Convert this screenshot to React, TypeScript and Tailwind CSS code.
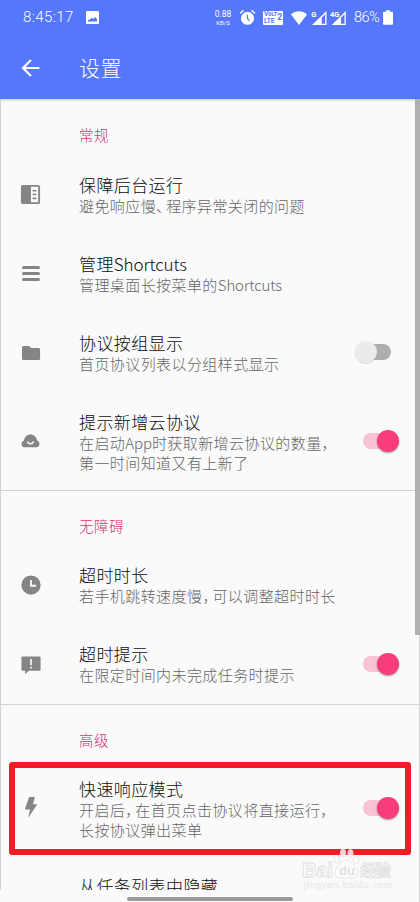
import type { ReactNode } from "react";

/* Narrow full-width punctuation, as the system font sets it. */
function Mark({ children }: { children: ReactNode }) {
  return <span className="tracking-[-5px]">{children}</span>;
}

/* Latin words sit tighter than the ideographs around them. */
function Latin({ children }: { children: ReactNode }) {
  return <span className="tracking-[-0.100px]">{children}</span>;
}

function Glyph({ d, size = 23 }: { d: string; size?: number }) {
  return (
    <svg width={size} height={size} viewBox="0 0 24 24" fill="currentColor" fillRule="evenodd">
      <path d={d} />
    </svg>
  );
}

const paths = {
  reader: "M4 2h16a2 2 0 0 1 2 2v16a2 2 0 0 1-2 2H4a2 2 0 0 1-2-2V4c0-1.1.9-2 2-2zm8.500 2v16H20V4zm1.700 3.200h4v1.700h-4zm0 4h4v1.700h-4zm0 4h4v1.700h-4z",
  folder: "M9.7 3.500H3C2 3.500 1.200 4.400 1.200 5.500v13c0 1.100.8 2 1.800 2h18c1.100 0 1.900-.9 1.900-2V8.100c0-1.100-.8-2-1.900-2h-8.900z",
  clock: "M12 1.500a10.500 10.500 0 1 0 0 21 10.500 10.500 0 0 0 0-21zM11 6.500h2v5.300h4.500v2H11z",
  feedback: "M2 3h20c.8 0 1.500.7 1.500 1.500v14c0 .8-.7 1.500-1.500 1.500H9.500L5 24v-4H2c-.8 0-1.500-.7-1.500-1.500v-14C.5 3.700 1.200 3 2 3zm9 3v7.500h2V6zm0 9.200v2.200h2v-2.200z",
};

function CloudFace() {
  return (
    <svg width="19" height="14" viewBox="0 0 19 14">
      <path fill="currentColor" d="M4 13.300C1.900 13.300.5 11.800.5 9.900c0-1.700 1-3 2.500-3.500C3.400 2.900 6.100.5 9.500.5s6.100 2.400 6.500 5.900c1.500.5 2.500 1.800 2.500 3.500 0 1.900-1.400 3.400-3.500 3.400z" />
      <path d="M6.600 7.300a2.950 2.950 0 0 0 5.800 0" fill="none" stroke="#fafafa" strokeWidth="1.500" />
    </svg>
  );
}

function Toggle({ on }: { on?: boolean }) {
  return on ? (
    <div className="mr-[21px] mb-px flex h-4 w-[36px] items-center justify-end rounded-full bg-[#fac2d5]">
      <div className="h-[22px] w-[22px] shrink-0 rounded-full bg-[#f93d7c] shadow-[0_1px_2px_rgba(0,0,0,0.4)]" />
    </div>
  ) : (
    <div className="mr-[29px] mb-[3px] flex h-4 w-[36px] items-center rounded-full bg-[#adadad]">
      <div className="h-[22px] w-[22px] shrink-0 rounded-full bg-[#ebebeb] shadow-[0_1px_1px_rgba(0,0,0,0.12)]" />
    </div>
  );
}

function Label({ children, first }: { children: string; first?: boolean }) {
  return (
    <h2 className={`pl-[79px] text-[14.500px] leading-5 tracking-[0.600px] text-[#d8306f] ${first ? "h-[57px] pt-[26px]" : "h-[55px] pt-[25px]"}`}>
      {children}
    </h2>
  );
}

function Row({ icon, title, children, toggle, tall }: { icon?: ReactNode; title: ReactNode; children?: ReactNode; toggle?: "on" | "off"; tall?: boolean }) {
  return (
    <div className={`flex shrink-0 items-center ${tall ? "h-[97px]" : "h-[79px]"}`}>
      <div className="flex w-[79px] shrink-0 items-center pb-[2px] pl-[19px] text-[#858585]">
        <div className="flex w-[23px] justify-center">{icon}</div>
      </div>
      <div className="h-full grow whitespace-nowrap pt-[18px]">
        <div className="text-[17px] leading-[22px] tracking-[0.400px] text-[#0c0c0c]">{title}</div>
        <div className="text-[15px] leading-[19.500px] tracking-[0.420px] text-[#666666]">{children}</div>
      </div>
      {toggle && <Toggle on={toggle === "on"} />}
    </div>
  );
}

function StatusBar() {
  return (
    <div className="flex h-[35px] items-center pl-[23px] text-white">
      <span className="w-[62px] font-['Roboto'] text-[15px] tracking-[0.400px]">8:45:17</span>
      <svg className="ml-px" width="13" height="13" viewBox="0 0 13 13">
        <path fill="white" fillRule="evenodd" d="M1 0h11a1 1 0 0 1 1 1v11a1 1 0 0 1-1 1H1a1 1 0 0 1-1-1V1a1 1 0 0 1 1-1zm1 10.500h9V8L8.800 6 7.500 8.200 5.600 6.500 4 8.500 2 9z" />
      </svg>
      <div className="ml-[115px] w-[18px] text-center font-['Roboto'] font-normal">
        <div className="text-[8.500px] leading-[9px]">0.88</div>
        <div className="text-[6px] leading-[7px]">KB/S</div>
      </div>
      <svg className="ml-[7px]" width="17" height="17" viewBox="0 0 17 17">
        <circle cx="8.500" cy="9.300" r="6.500" fill="white" />
        <path d="M1 4.500 4.500 1.200M12.500 1.200 16 4.500" stroke="white" strokeWidth="1.400" />
        <path d="M8.400 6v3.500l2 2" fill="none" stroke="#5577fc" strokeWidth="1.200" />
      </svg>
      <div className="ml-[7px] flex h-[14px] w-[20px] items-center justify-center rounded-[1px] bg-white font-['Roboto'] font-bold text-[#5577fc]">
        <div className="text-[6.500px] leading-[7px]"><div>Vo<span className="text-[5px]">LT</span></div><div>LTE</div></div>
        <div className="text-[9px] leading-none">2</div>
      </div>
      <svg className="ml-[8px]" width="16" height="14" viewBox="0 0 16 14">
        <path fill="white" d="M0 3.500C4.500-.9 11.500-.9 16 3.500L8 14z" />
      </svg>
      <svg className="ml-[4px]" width="35" height="16" viewBox="0 0 35 16">
        <path fill="white" fillRule="evenodd" d="M15.500 1v14H1zm-1.300 3.300-3.500 3.500v6h3.500zM34.800 1v14h-14zm-1.300 3.300-3.500 3.500v6h3.500z" />
        <text x="0.300" y="6.500" fill="white" fontSize="7.500" fontWeight="bold" fontFamily="Roboto">G</text>
        <text x="19" y="6.500" fill="white" fontSize="7.500" fontWeight="bold" fontFamily="Roboto">4G</text>
      </svg>
      <span className="ml-[8px] w-[26px] font-['Roboto'] text-[14.500px] font-light tracking-[-0.500px]">86%</span>
      <svg className="ml-[3px]" width="10" height="15" viewBox="0 0 11 16">
        <path fill="white" d="M3.500 0h4v1.700H10a1 1 0 0 1 1 1V15a1 1 0 0 1-1 1H1a1 1 0 0 1-1-1V2.700a1 1 0 0 1 1-1h2.500z" />
      </svg>
    </div>
  );
}

function Watermark() {
  return (
    <svg className="absolute left-[300px] top-[846px]" width="96" height="46" viewBox="0 0 96 46">
      <g fill="#fdfdfd" fillOpacity="0.800" stroke="#dedede" strokeWidth="0.800" fontFamily="Liberation Sans, Noto Sans CJK SC, sans-serif" fontWeight="bold">
        <text x="2" y="31" fontSize="21" textLength="31">Bai</text>
        <path d="M46 14c-4 0-5 4-8 6.500-6 5-3 12 3 11.500h11c6 .5 9-6.500 3-11.500C52 18 50 14 46 14z" />
        <ellipse cx="37" cy="13" rx="2.800" ry="4" />
        <ellipse cx="43" cy="7" rx="2.700" ry="4" />
        <ellipse cx="50.500" cy="7.500" rx="2.700" ry="4" />
        <ellipse cx="56" cy="14" rx="2.700" ry="4" />
        <text x="39" y="29" fontSize="13" fill="#d9d9d9" stroke="none">du</text>
        <text x="60" y="30" fontSize="16" textLength="31">经验</text>
        <text x="4" y="42" fontSize="9.500" strokeWidth="0.300" stroke="#e6e6e6" fill="#f0f0f0" fontWeight="normal" textLength="88">jingyan.baidu.com</text>
      </g>
    </svg>
  );
}

export default function App() {
  return (
    <div className="relative flex h-[902px] w-[420px] flex-col overflow-hidden bg-[#fafafa] font-['Noto_Sans_CJK_SC',sans-serif] font-light">
      <header className="h-[99px] shrink-0 bg-[#5577fc]">
        <StatusBar />
        <div className="flex h-[66px] items-center pl-[21px] text-white">
          <svg width="20" height="20" viewBox="0 0 20 20" fill="none" stroke="white" strokeWidth="2.200">
            <path d="M18.500 10H2.500M10 2l-8 8 8 8" />
          </svg>
          <h1 className="mb-[2px] ml-[38px] text-[21px] leading-7 tracking-[0.500px]">设置</h1>
        </div>
      </header>
      <main className="flex h-[791px] shrink-0 flex-col overflow-hidden border-l border-[#d3d3d3] [&>*]:-ml-px">
        <section className="h-[392px] shrink-0 border-b border-[#cfcfcf] shadow-[inset_0_3px_3px_-2px_rgba(0,0,0,0.200)]">
          <Label first>常规</Label>
          <Row icon={<Glyph d={paths.reader} />} title="保障后台运行">避免响应慢<Mark>、</Mark>程序异常关闭的问题</Row>
          <Row
            icon={<div className="flex w-[18px] flex-col gap-[3px]"><i className="h-[3px] rounded-sm bg-current" /><i className="h-[3px] rounded-sm bg-current" /><i className="h-[3px] rounded-sm bg-current" /></div>}
            title={<>管理<Latin>Shortcuts</Latin></>}
          >管理桌面长按菜单的<Latin>Shortcuts</Latin></Row>
          <Row icon={<Glyph d={paths.folder} size={20} />} title="协议按组显示" toggle="off">首页协议列表以分组样式显示</Row>
          <Row icon={<CloudFace />} title="提示新增云协议" toggle="on" tall>在启动<Latin>App</Latin>时获取新增云协议的数量<Mark>，</Mark><br />第一时间知道又有上新了</Row>
        </section>
        <section className="h-[214px] shrink-0 border-b border-[#d4d4d4]">
          <Label>无障碍</Label>
          <Row icon={<Glyph d={paths.clock} size={22} />} title="超时时长">若手机跳转速度慢<Mark>，</Mark>可以调整超时时长</Row>
          <Row icon={<Glyph d={paths.feedback} size={20} />} title="超时提示" toggle="on">在限定时间内未完成任务时提示</Row>
        </section>
        <section className="shrink-0">
          <Label>高级</Label>
          <Row
            icon={<svg width="14" height="21" viewBox="0 0 14 22" fill="currentColor"><path d="M5 0h6L9 7.500h4.500L4 22l2-9H.5z" /></svg>}
            title="快速响应模式" toggle="on" tall
          >开启后<Mark>，</Mark>在首页点击协议将直接运行<Mark>，</Mark><br />长按协议弹出菜单</Row>
          <Row title="从任务列表中隐藏" />
        </section>
      </main>
      <div className="mt-[7px] ml-[127px] h-[4px] w-[166px] shrink-0 rounded-full bg-[#9b9b9b]" />
      <div className="absolute left-[415px] top-[99px] h-[536px] w-[5px] bg-[#b0b0b0]" />
      <div className="absolute left-[419px] top-[635px] h-[267px] w-px bg-[#d3d3d3]" />
      <div className="absolute left-[9px] top-[762px] h-[93px] w-[402px] rounded-[3px] border-[6px] border-[#ee1c25]" />
      <Watermark />
    </div>
  );
}
